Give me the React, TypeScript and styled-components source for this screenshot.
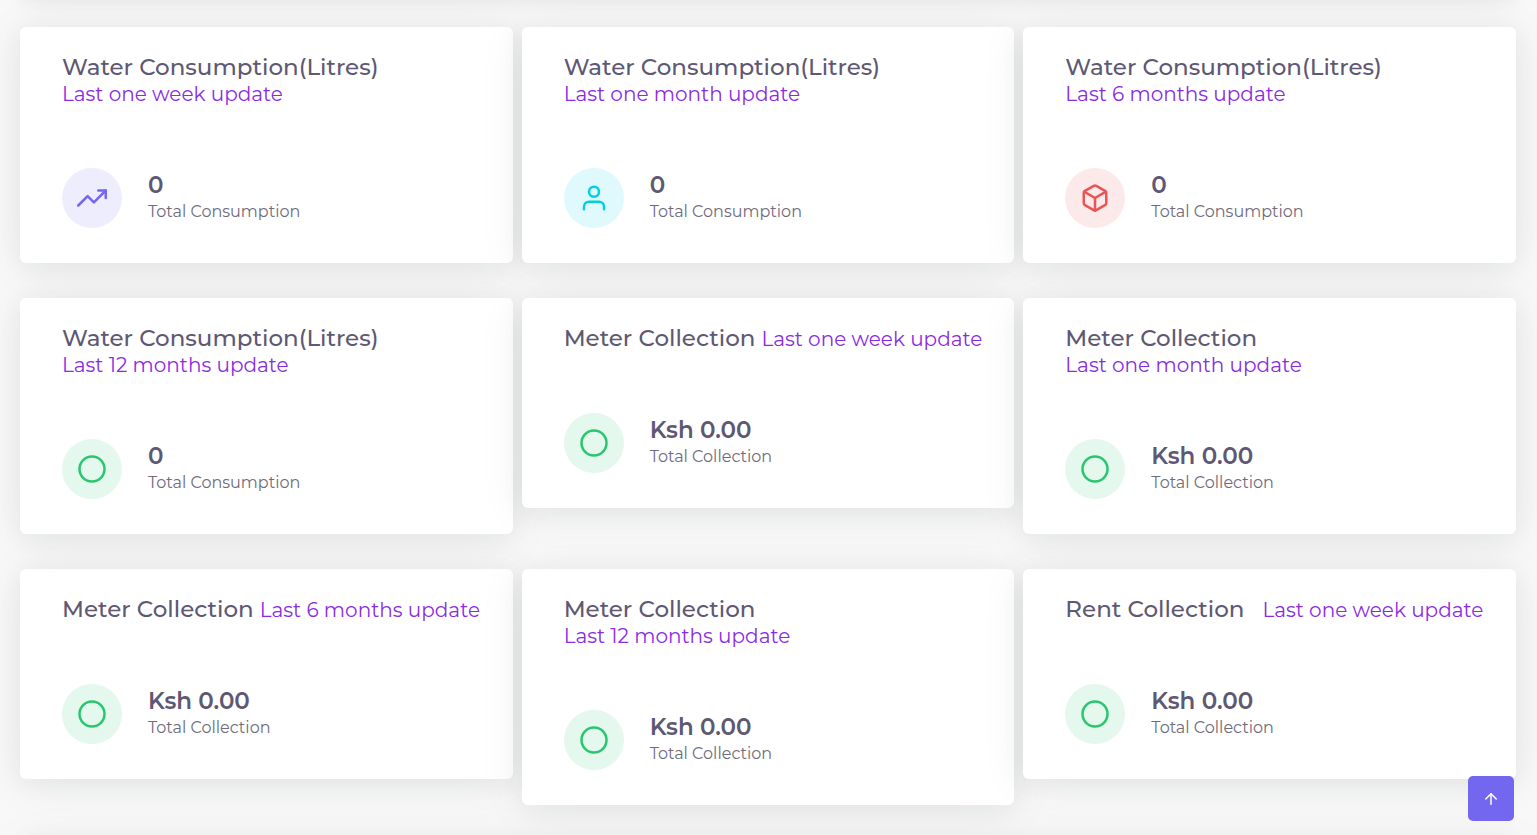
import React from "react";
import styled, { createGlobalStyle } from "styled-components";
import { FiArrowUp, FiBox, FiCircle, FiTrendingUp, FiUser } from "react-icons/fi";
import type { IconType } from "react-icons";

const GlobalStyle = createGlobalStyle`
  * { box-sizing: border-box; }
  body {
    margin: 0;
    background: #f8f8f8;
    color: #6e6b7b;
    font-family: Montserrat, Inter, "Liberation Sans", sans-serif;
  }
`;

const Page = styled.main`
  height: 100vh;
  overflow: hidden;
  padding: 0 21px 0 20px;
`;

const Panel = styled.section`
  background: #ffffff;
  border-radius: 6px;
  box-shadow: 0 4px 24px rgba(34, 41, 47, 0.05), 0 4px 48px rgba(34, 47, 44, 0.07);
`;

const SummaryPanel = styled(Panel)`
  height: 160px;
  margin: -168px 5px 35px;
  box-shadow: 0 4px 24px rgba(34, 41, 47, 0.15);
`;

const DetailsPanel = styled(Panel)`
  height: 160px;
  margin-top: 35px;
`;

const CardGrid = styled.div`
  display: grid;
  grid-template-columns: repeat(3, minmax(0, 1fr));
  gap: 35px 9px;
  align-items: start;
`;

const Card = styled(Panel)`
  padding: 27px 0 35px 42px;
`;

const Heading = styled.header<{ $stacked?: boolean; $wide?: boolean }>`
  display: flex;
  flex-direction: ${(p) => (p.$stacked ? "column" : "row")};
  align-items: ${(p) => (p.$stacked ? "flex-start" : "baseline")};
  column-gap: ${(p) => (p.$wide ? 18 : 6)}px;
  margin-bottom: 61px;
  white-space: nowrap;
`;

const Title = styled.h4`
  margin: 0;
  color: #5e5873;
  font-size: 23px;
  font-weight: 500;
  line-height: 27px;
`;

const Period = styled.span`
  color: #8a2be2;
  font-size: 20px;
  line-height: 26px;
`;

const Stat = styled.div`
  display: flex;
  gap: 26px;
`;

const tones = {
  primary: ["#7367f0", "#eeedfd"],
  info: ["#00cfe8", "#e0f9fc"],
  danger: ["#ea5455", "#fceaea"],
  success: ["#28c76f", "#e5f8ed"],
};

const Avatar = styled.div<{ $tone: keyof typeof tones }>`
  display: flex;
  flex: none;
  align-items: center;
  justify-content: center;
  width: 60px;
  height: 60px;
  border-radius: 50%;
  color: ${(p) => tones[p.$tone][0]};
  background: ${(p) => tones[p.$tone][1]};
`;

const Amount = styled.h4`
  margin: 4px 0 0;
  color: #5e5873;
  font-size: 23px;
  font-weight: 600;
  line-height: 27px;
`;

const Caption = styled.p`
  margin: 0;
  font-size: 16px;
  line-height: 25px;
`;

const ScrollTop = styled.button`
  position: fixed;
  right: 23px;
  bottom: 14px;
  display: flex;
  align-items: center;
  justify-content: center;
  width: 46px;
  height: 45px;
  padding: 0;
  border: 0;
  border-radius: 5px;
  color: #ffffff;
  background: #7367f0;
  cursor: pointer;
`;

type Item = {
  title: string;
  period: string;
  amount: string;
  caption: string;
  icon: IconType;
  tone: keyof typeof tones;
  stacked?: boolean;
  wide?: boolean;
};

const water = { title: "Water Consumption(Litres)", amount: "0", caption: "Total Consumption", stacked: true };
const meter = {
  title: "Meter Collection",
  amount: "Ksh 0.00",
  caption: "Total Collection",
  icon: FiCircle,
  tone: "success" as const,
};

const items: Item[] = [
  { ...water, period: "Last one week update", icon: FiTrendingUp, tone: "primary" },
  { ...water, period: "Last one month update", icon: FiUser, tone: "info" },
  { ...water, period: "Last 6 months update", icon: FiBox, tone: "danger" },
  { ...water, period: "Last 12 months update", icon: FiCircle, tone: "success" },
  { ...meter, period: "Last one week update" },
  { ...meter, period: "Last one month update", stacked: true },
  { ...meter, period: "Last 6 months update" },
  { ...meter, period: "Last 12 months update", stacked: true },
  { ...meter, title: "Rent Collection", period: "Last one week update", wide: true },
];

function StatCard({ title, period, amount, caption, icon: Icon, tone, stacked, wide }: Item) {
  return (
    <Card>
      <Heading $stacked={stacked} $wide={wide}>
        <Title>{title}</Title>
        <Period>{period}</Period>
      </Heading>
      <Stat>
        <Avatar $tone={tone}>
          <Icon size={30} aria-hidden />
        </Avatar>
        <div>
          <Amount>{amount}</Amount>
          <Caption>{caption}</Caption>
        </div>
      </Stat>
    </Card>
  );
}

export default function App() {
  return (
    <>
      <GlobalStyle />
      <Page>
        <SummaryPanel />
        <CardGrid>
          {items.map((item) => (
            <StatCard key={item.title + item.period} {...item} />
          ))}
        </CardGrid>
        <DetailsPanel />
      </Page>
      <ScrollTop type="button" aria-label="Scroll to top">
        <FiArrowUp size={18} aria-hidden />
      </ScrollTop>
    </>
  );
}
